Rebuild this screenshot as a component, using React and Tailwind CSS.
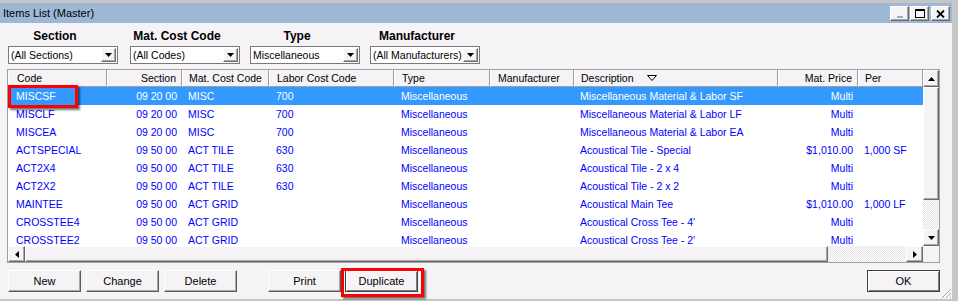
import React from 'react';

// Column layout for the grid (widths in px, header + cell padding)
const COLUMNS = [
    { key: 'code', label: 'Code', w: 'w-[99px]', pad: 'pl-[8px] justify-start' },
    { key: 'section', label: 'Section', w: 'w-[75px]', pad: 'pr-[5px] justify-end' },
    { key: 'mat', label: 'Mat. Cost Code', w: 'w-[87px]', pad: 'pl-[6px] justify-start' },
    { key: 'labor', label: 'Labor Cost Code', w: 'w-[125px]', pad: 'pl-[7px] justify-start' },
    { key: 'type', label: 'Type', w: 'w-[96px]', pad: 'pl-[7px] justify-start' },
    { key: 'manuf', label: 'Manufacturer', w: 'w-[84px]', pad: 'pl-[7px] justify-start' },
    { key: 'desc', label: 'Description', w: 'w-[204px]', pad: 'pl-[6px] justify-start' },
    { key: 'price', label: 'Mat. Price', w: 'w-[80px]', pad: 'pr-[5px] justify-end' },
    { key: 'per', label: 'Per', w: 'w-[65px]', pad: 'pl-[6px] justify-start' },
];

const ROWS = [
    { code: 'MISCSF', section: '09 20 00', mat: 'MISC', labor: '700', type: 'Miscellaneous', manuf: '', desc: 'Miscellaneous Material & Labor SF', price: 'Multi', per: '' },
    { code: 'MISCLF', section: '09 20 00', mat: 'MISC', labor: '700', type: 'Miscellaneous', manuf: '', desc: 'Miscellaneous Material & Labor LF', price: 'Multi', per: '' },
    { code: 'MISCEA', section: '09 20 00', mat: 'MISC', labor: '700', type: 'Miscellaneous', manuf: '', desc: 'Miscellaneous Material & Labor EA', price: 'Multi', per: '' },
    { code: 'ACTSPECIAL', section: '09 50 00', mat: 'ACT TILE', labor: '630', type: 'Miscellaneous', manuf: '', desc: 'Acoustical Tile - Special', price: '$1,010.00', per: '1,000 SF' },
    { code: 'ACT2X4', section: '09 50 00', mat: 'ACT TILE', labor: '630', type: 'Miscellaneous', manuf: '', desc: 'Acoustical Tile - 2 x 4', price: 'Multi', per: '' },
    { code: 'ACT2X2', section: '09 50 00', mat: 'ACT TILE', labor: '630', type: 'Miscellaneous', manuf: '', desc: 'Acoustical Tile - 2 x 2', price: 'Multi', per: '' },
    { code: 'MAINTEE', section: '09 50 00', mat: 'ACT GRID', labor: '', type: 'Miscellaneous', manuf: '', desc: 'Acoustical Main Tee', price: '$1,010.00', per: '1,000 LF' },
    { code: 'CROSSTEE4', section: '09 50 00', mat: 'ACT GRID', labor: '', type: 'Miscellaneous', manuf: '', desc: "Acoustical Cross Tee - 4'", price: 'Multi', per: '' },
    { code: 'CROSSTEE2', section: '09 50 00', mat: 'ACT GRID', labor: '', type: 'Miscellaneous', manuf: '', desc: "Acoustical Cross Tee - 2'", price: 'Multi', per: '' },
];

const FILTERS = [
    { label: 'Section', value: '(All Sections)', ml: 'ml-[8px]' },
    { label: 'Mat. Cost Code', value: '(All Codes)', ml: 'ml-[12px]' },
    { label: 'Type', value: 'Miscellaneous', ml: 'ml-[10px]' },
    { label: 'Manufacturer', value: '(All Manufacturers)', ml: 'ml-[10px]' },
];

// Small black arrow glyphs used on scroll / combo buttons
const Arrow = ({ dir }) => {
    const pts = {
        down: '0,0 7,0 3.5,4',
        up: '0,4 7,4 3.5,0',
        left: '4,0 4,7 0,3.5',
        right: '0,0 0,7 4,3.5',
    }[dir];
    const vertical = dir === 'up' || dir === 'down';
    return (
        <svg width={vertical ? 7 : 4} height={vertical ? 4 : 7} viewBox={vertical ? '0 0 7 4' : '0 0 4 7'}>
            <polygon points={pts} fill="#000" />
        </svg>
    );
};

const Raised = ({ className = '', children }) => (
    <div className={`flex items-center justify-center bg-[#f5f3f6] border-t border-l border-t-white border-l-white border-r border-b border-r-[#6b6b6b] border-b-[#6b6b6b] shadow-[inset_-1px_-1px_0_#a8a8a8] ${className}`}>
        {children}
    </div>
);

const Combo = ({ value }) => (
    <div className="flex w-[110px] h-[18px] bg-white border border-[#7a7a7a] items-stretch text-[10.5px]">
        <div className="flex-1 flex items-center pl-[2px] text-black whitespace-nowrap overflow-hidden">{value}</div>
        <Raised className="w-[15px] m-[1px]">
            <Arrow dir="down" />
        </Raised>
    </div>
);

const Button = ({ children, className = '', isDefault }) => (
    <div
        className={`flex items-center justify-center w-[73px] h-[22px] bg-[#f5f3f6] text-black ${
            isDefault
                ? 'border border-[#404040] shadow-[inset_1px_1px_0_#fff,inset_-1px_-1px_0_#808080]'
                : 'border-t border-l border-t-white border-l-white border-r border-b border-r-[#5a5a5a] border-b-[#5a5a5a] shadow-[inset_-1px_-1px_0_#a8a8a8]'
        } ${className}`}
    >
        {children}
    </div>
);

const Dither = ({ className = '' }) => (
    <div className={`bg-[conic-gradient(#ffffff_25%,#e4e2e4_0_50%,#ffffff_0_75%,#e4e2e4_0)] bg-[length:2px_2px] ${className}`} />
);

export default function App() {
    return (
        <div className="relative w-[958px] h-[301px] overflow-hidden bg-[#c6c6c6] pt-[3px] pr-[6px] pb-[2px] font-['Liberation_Sans',Arial,sans-serif] text-[11px] leading-none">
            <div className="flex flex-col h-full bg-[#f5f3f6]">
                {/* Title bar */}
                <div className="flex items-center h-[20px] bg-[#9db7d5] pl-[3px] pr-[2px]">
                    <span className="text-black">Items List (Master)</span>
                    <div className="ml-auto flex items-center gap-[1px] mt-[1px]">
                        <Raised className="w-[19px] h-[15px] bg-[#ecebec]">
                            <div className="w-[6px] h-[2px] bg-[#a8a8a8] mt-[7px]" />
                        </Raised>
                        <Raised className="w-[19px] h-[15px]">
                            <div className="w-[10px] h-[9px] border border-black border-t-2" />
                        </Raised>
                        <Raised className="w-[19px] h-[15px] ml-[1px]">
                            <svg width="9" height="8" viewBox="0 0 9 8">
                                <path d="M1 0.5 L8 7.5 M8 0.5 L1 7.5" stroke="#000" strokeWidth="1.8" />
                            </svg>
                        </Raised>
                    </div>
                </div>

                {/* Filters */}
                <div className="flex mt-[5px]">
                    {FILTERS.map((f) => (
                        <div key={f.label} className={`flex flex-col ${f.ml}`}>
                            <div className="h-[15px] flex items-center justify-center pr-[16px] font-bold text-[12px] text-black">
                                {f.label}
                            </div>
                            <div className="mt-[3px]">
                                <Combo value={f.value} />
                            </div>
                        </div>
                    ))}
                </div>

                {/* Grid */}
                <div className="ml-[7px] mt-[5px] w-[933px] h-[194px] border border-[#a0a0a0] bg-white flex flex-col text-[10.5px]">
                    <div className="flex h-[176px]">
                        <div className="w-[915px] flex flex-col">
                            <div className="flex h-[17px] bg-[#f5f3f6]">
                                {COLUMNS.map((c) => (
                                    <div
                                        key={c.key}
                                        className={`${c.w} ${c.pad} flex items-center h-full text-black border-l border-l-white border-r border-r-[#a0a0a0] border-b border-b-[#a0a0a0] whitespace-nowrap`}
                                    >
                                        {c.label}
                                        {c.key === 'desc' && (
                                            <svg className="ml-[13px]" width="10" height="6" viewBox="0 0 10 6">
                                                <polygon points="0.5,0.5 9.5,0.5 5,5.5" fill="none" stroke="#000" strokeWidth="1" />
                                            </svg>
                                        )}
                                    </div>
                                ))}
                            </div>
                            <div className="flex-1 overflow-hidden">
                                {ROWS.map((r, i) => (
                                    <div
                                        key={r.code}
                                        className={`flex h-[18px] ${i === 0 ? 'bg-[#3399ff] text-white' : 'text-[#0000ff]'}`}
                                    >
                                        {COLUMNS.map((c) => (
                                            <div key={c.key} className={`${c.w} ${c.pad} flex items-center whitespace-nowrap overflow-hidden`}>
                                                {r[c.key]}
                                            </div>
                                        ))}
                                    </div>
                                ))}
                            </div>
                        </div>
                        {/* Vertical scrollbar */}
                        <div className="w-[16px] flex flex-col">
                            <Raised className="h-[17px]">
                                <Arrow dir="up" />
                            </Raised>
                            <Raised className="h-[113px]" />
                            <Dither className="flex-1" />
                            <Raised className="h-[17px]">
                                <Arrow dir="down" />
                            </Raised>
                        </div>
                    </div>
                    {/* Horizontal scrollbar */}
                    <div className="flex flex-1">
                        <Raised className="w-[17px]">
                            <Arrow dir="left" />
                        </Raised>
                        <Raised className="w-[803px]" />
                        <Dither className="flex-1" />
                        <Raised className="w-[17px]">
                            <Arrow dir="right" />
                        </Raised>
                        <div className="w-[16px] bg-[#f5f3f6]" />
                    </div>
                </div>

                {/* Buttons */}
                <div className="flex mt-[7px] pl-[8px] pr-[12px]">
                    <Button>New</Button>
                    <Button className="ml-[5px]">Change</Button>
                    <Button className="ml-[5px]">Delete</Button>
                    <Button className="ml-[31px]">Print</Button>
                    <Button className="ml-[4px]" isDefault>Duplicate</Button>
                    <Button className="ml-auto" isDefault>OK</Button>
                </div>
            </div>

            {/* Resize grip */}
            <svg className="absolute left-[940px] top-[287px]" width="12" height="12" viewBox="0 0 12 12">
                <path d="M11 2 L2 11 M11 6 L6 11 M11 10 L10 11" stroke="#a0a0a0" strokeWidth="1" />
                <path d="M11 3 L3 11 M11 7 L7 11" stroke="#ffffff" strokeWidth="1" />
            </svg>

            {/* Red annotation boxes */}
            <div className="absolute left-[8px] top-[85px] w-[70px] h-[23px] border-[3px] border-[#ff0000] shadow-[2px_2px_2px_rgba(0,0,0,0.55)]" />
            <div className="absolute left-[341px] top-[268px] w-[83px] h-[29px] border-[3px] border-[#ff0000] shadow-[2px_2px_2px_rgba(0,0,0,0.55)]" />
        </div>
    );
}
